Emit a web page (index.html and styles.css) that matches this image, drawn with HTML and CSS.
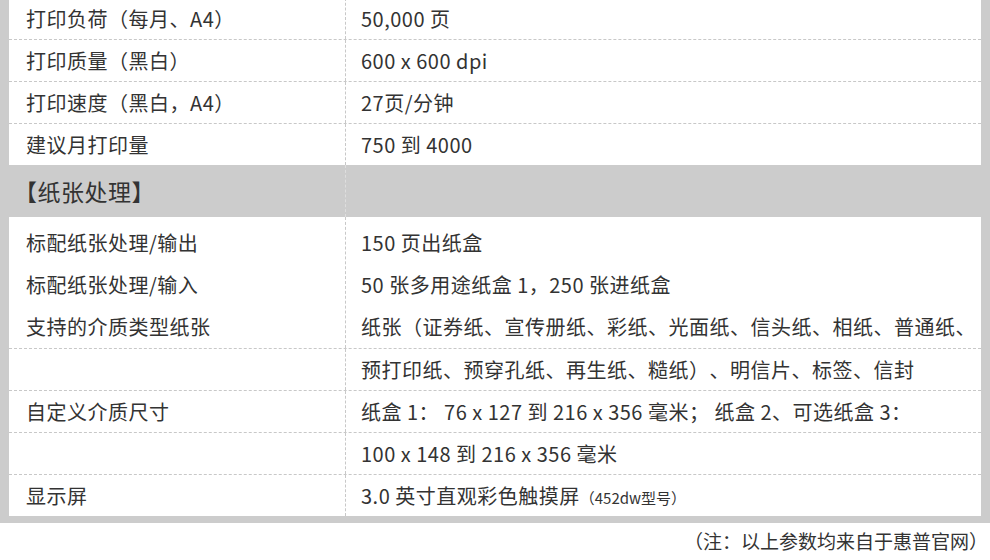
FILE: index.html
```html
<!DOCTYPE html>
<html lang="zh-CN">
<head>
<meta charset="utf-8">
<title>参数</title>
<link rel="stylesheet" href="styles.css">
</head>
<body>
<div class="frame">
  <div class="table">
    <div class="row first">
      <div class="cell k">打印负荷（每月、A4）</div>
      <div class="cell v">50,000 页</div>
    </div>
    <div class="row">
      <div class="cell k">打印质量（黑白）</div>
      <div class="cell v">600 x 600 dpi</div>
    </div>
    <div class="row">
      <div class="cell k">打印速度（黑白，A4）</div>
      <div class="cell v">27页/分钟</div>
    </div>
    <div class="row">
      <div class="cell k">建议月打印量</div>
      <div class="cell v">750 到 4000</div>
    </div>
    <div class="row section">
      <div class="cell k">【纸张处理】</div>
      <div class="cell v"></div>
    </div>
    <div class="row group">
      <div class="cell k">标配纸张处理/输出<br>标配纸张处理/输入<br>支持的介质类型纸张</div>
      <div class="cell v">150 页出纸盒<br>50 张多用途纸盒 1，250 张进纸盒<br>纸张（证券纸、宣传册纸、彩纸、光面纸、信头纸、相纸、普通纸、</div>
    </div>
    <div class="row">
      <div class="cell k"></div>
      <div class="cell v">预打印纸、预穿孔纸、再生纸、糙纸）、明信片、标签、信封</div>
    </div>
    <div class="row">
      <div class="cell k">自定义介质尺寸</div>
      <div class="cell v">纸盒 1： 76 x 127 到 216 x 356 毫米； 纸盒 2、可选纸盒 3：</div>
    </div>
    <div class="row">
      <div class="cell k"></div>
      <div class="cell v">100 x 148 到 216 x 356 毫米</div>
    </div>
    <div class="row">
      <div class="cell k">显示屏</div>
      <div class="cell v">3.0 英寸直观彩色触摸屏<span class="small">（452dw型号）</span></div>
    </div>
  </div>
</div>
<p class="note">（注：以上参数均来自于惠普官网）</p>
</body>
</html>
```

FILE: styles.css
```css
html, body {
  margin: 0;
  padding: 0;
  background: #fff;
}
body {
  font-family: "Noto Sans CJK SC", "Noto Sans", sans-serif;
  color: #333;
  overflow: hidden;
  text-spacing-trim: space-all;
}
.frame {
  background: #cccccc;
  padding: 0 9px 7px;
  margin-top: -2px;
}
.table {
  background: #fff;
}
.row {
  display: grid;
  grid-template-columns: 337px 1fr;
  border-top: 1px dashed #c8c8c8;
}
.row.first,
.row.section,
.row.group {
  border-top: none;
}
.cell {
  font-size: 20px;
  letter-spacing: 0.5px;
  line-height: 41px;
  height: 41px;
  white-space: nowrap;
  overflow: hidden;
}
.cell.k {
  padding-left: 17px;
  border-right: 1px dashed #c8c8c8;
}
.cell.v {
  padding-left: 15px;
}
.section {
  background: #cccccc;
}
.section .cell {
  height: 52px;
  line-height: 52px;
  font-size: 23px;
}
.section .cell.k {
  padding-left: 5px;
  border-right-color: #dedede;
}
.group .cell {
  height: 131px;
  padding-top: 5px;
  box-sizing: border-box;
  line-height: 42px;
}
.small {
  font-size: 15px;
  letter-spacing: 0;
}
.note {
  margin: 0;
  font-size: 19px;
  line-height: 36px;
  text-align: right;
  padding-right: 2px;
}
```
